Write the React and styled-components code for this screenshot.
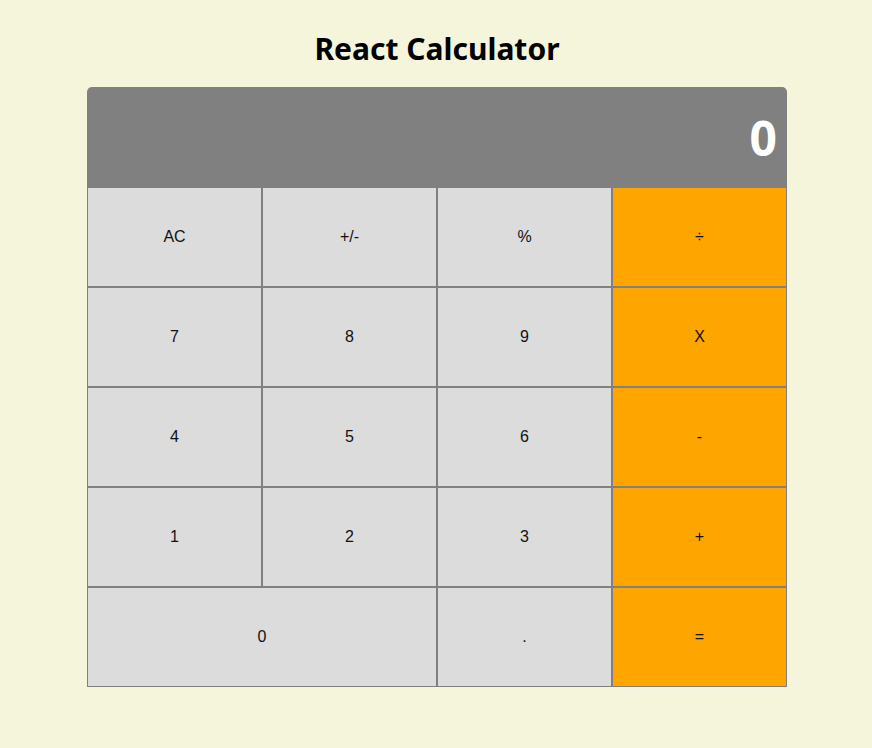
import React from 'react'
import styled, { createGlobalStyle } from 'styled-components'

const GlobalStyle = createGlobalStyle`
    body {
        margin: 0;
        background-color: #f5f5dc;
        font-family: "Noto Sans", "Open Sans", sans-serif;
    }
`

const Page = styled.div`
    display: flex;
    flex-direction: column;
    align-items: center;
    padding: 0 0 0 2px;
`

const Title = styled.h1`
    font-size: 30px;
    font-weight: bold;
    margin: 28px 0 18px;
    color: #000;
`

const Calculator = styled.div`
    width: 700px;
`

const Display = styled.div`
    height: 100px;
    box-sizing: border-box;
    display: flex;
    align-items: center;
    justify-content: flex-end;
    padding-right: 10px;
    background-color: #808080;
    border-radius: 5px 5px 0 0;
    color: white;
    font-size: 48px;
    font-weight: bold;
`

const Keys = styled.div`
    display: grid;
    grid-template-columns: repeat(4, 175px);
    grid-auto-rows: 100px;
`

const Key = styled.button`
    box-sizing: border-box;
    border: 1px solid #808080;
    margin: 0;
    padding: 0;
    grid-column: span ${p => p.$span || 1};
    background-color: ${p => (p.$operator ? '#ffa500' : '#dcdcdc')};
    color: #111;
    font-family: "Liberation Sans", Arial, sans-serif;
    font-size: 16px;
    cursor: pointer;
`

const keys = [
    ['AC'], ['+/-'], ['%'], ['÷', true],
    ['7'], ['8'], ['9'], ['X', true],
    ['4'], ['5'], ['6'], ['-', true],
    ['1'], ['2'], ['3'], ['+', true],
    ['0', false, 2], ['.'], ['=', true],
]

const App = () => {
    return (
        <Page>
            <GlobalStyle />
            <Title>React Calculator</Title>
            <Calculator>
                <Display>0</Display>
                <Keys>
                    {keys.map(([label, op, span]) => (
                        <Key key={label} $operator={op} $span={span}>{label}</Key>
                    ))}
                </Keys>
            </Calculator>
        </Page>
    )
}

export default App
